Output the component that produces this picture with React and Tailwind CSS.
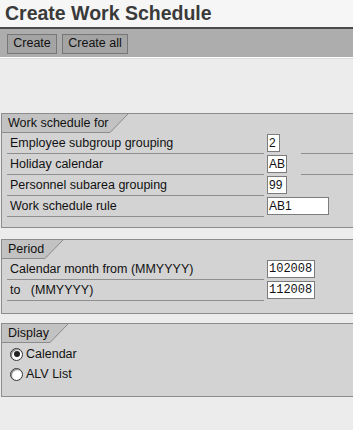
/**
 * App.jsx
 * SAP-style "Create Work Schedule" selection screen.
 */

const FONT = { fontFamily: '"Liberation Sans", Arial, sans-serif' }

function SectionTab({ title }) {
  return (
    <div className="flex h-[19px] items-stretch">
      <div className="flex items-center bg-[#c2c2c2] border-b border-[#8c8c8c] pl-[6px] pr-[1px] text-[12.5px] text-[#111]">
        {title}
      </div>
      <svg width="18" height="19" viewBox="0 0 18 19" className="block">
        <polygon points="0,0 18,0 0,19" fill="#c2c2c2" />
        <line x1="0" y1="18.5" x2="18" y2="0" stroke="#8c8c8c" strokeWidth="1" />
      </svg>
    </div>
  )
}

function Section({ title, children, className = '' }) {
  return (
    <div className={`ml-[1px] w-[370px] border border-[#8c8c8c] bg-[#d3d3d3] ${className}`}>
      <SectionTab title={title} />
      {children}
    </div>
  )
}

function Field({ label, value, width, mono = false, trail = false }) {
  return (
    <div className="flex h-[21px] items-stretch pl-[5px]">
      <div className="flex w-[257px] items-center border-b border-[#8f8f8f] pl-[3px] text-[12.5px] text-[#111] whitespace-pre">
        {label}
      </div>
      <div className="ml-[3px] pt-[1px]">
        <div
          className={`flex h-[18px] items-center overflow-hidden border border-[#7c7c7c] bg-white px-[1px] text-[12px] text-[#111] ${width}`}
          style={mono ? { fontFamily: '"Liberation Mono", "Courier New", monospace' } : undefined}
        >
          {value}
        </div>
      </div>
      {trail && <div className="ml-auto w-[69px] border-b border-[#8f8f8f]" />}
    </div>
  )
}

function Radio({ label, checked }) {
  return (
    <div className="flex h-[20px] items-center pl-[8px] text-[12.5px] text-[#111]">
      <div className="flex h-[13px] w-[13px] items-center justify-center rounded-full border border-[#333] bg-white shadow-[inset_1px_1px_1px_#888]">
        {checked && <div className="h-[6px] w-[6px] rounded-full bg-[#222]" />}
      </div>
      <span className="ml-[3px]">{label}</span>
    </div>
  )
}

export default function App() {
  return (
    <div className="h-[430px] w-[353px] overflow-hidden bg-[#ececec]" style={FONT}>
      {/* Title */}
      <div className="h-[27px] bg-[#f6f6f6] pl-[5px] pt-[1px] text-[19.5px] font-bold leading-[24px] text-[#3a3a3a]">
        Create Work Schedule
      </div>
      <div className="h-[2px] bg-[#4a4a4a]" />

      {/* Toolbar */}
      <div className="flex h-[28px] items-center gap-[5px] bg-[#adadad] pl-[7px] pt-[1px]">
        <button className="h-[20px] w-[50px] border border-[#777] bg-[#a4a4a4] text-[12.5px] leading-none text-[#111]">
          Create
        </button>
        <button className="h-[20px] w-[66px] border border-[#777] bg-[#a4a4a4] text-[12.5px] leading-none text-[#111]">
          Create all
        </button>
      </div>
      <div className="h-[1px] bg-white" />
      <div className="h-[1px] bg-[#dcdcdc]" />

      <div className="pt-[54px]">
        <Section title="Work schedule for" className="pb-[10px]">
          <Field label="Employee subgroup grouping" value="2" width="w-[13px]" trail />
          <Field label="Holiday calendar" value="AB" width="w-[20px]" trail />
          <Field label="Personnel subarea grouping" value="99" width="w-[20px]" />
          <Field label="Work schedule rule" value="AB1" width="w-[62px]" />
        </Section>

        <Section title="Period" className="mt-[11px] pb-[12px]">
          <Field label="Calendar month from (MMYYYY)" value="102008" width="w-[48px]" mono />
          <Field label="to   (MMYYYY)" value="112008" width="w-[48px]" mono />
        </Section>

        <Section title="Display" className="mt-[9px] pb-[12px]">
          <div className="pt-[1px]">
            <Radio label="Calendar" checked />
            <Radio label="ALV List" />
          </div>
        </Section>
      </div>
    </div>
  )
}
